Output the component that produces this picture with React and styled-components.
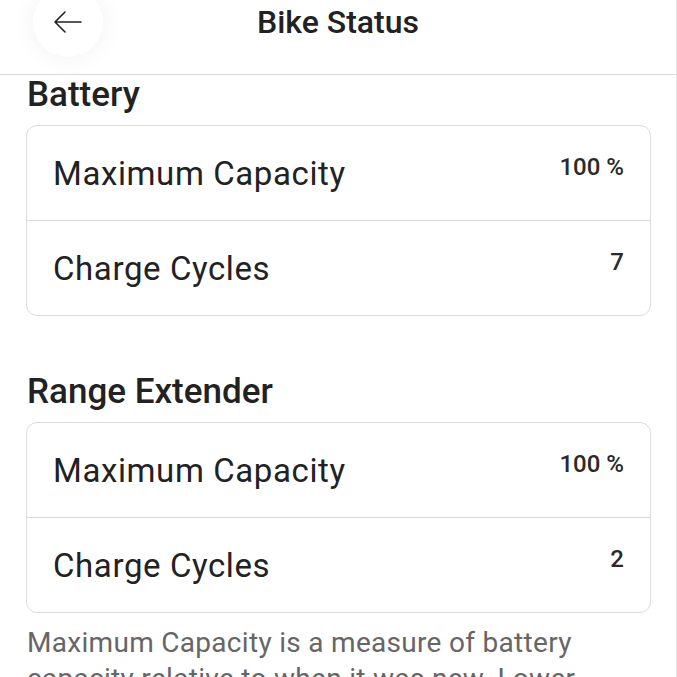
import React from "react";
import styled, { createGlobalStyle } from "styled-components";

const GlobalStyle = createGlobalStyle`
  html, body {
    margin: 0;
    padding: 0;
    background: #fff;
    overflow: hidden;
  }
  body {
    font-family: Roboto, "Liberation Sans", sans-serif;
    color: #222;
  }
`;

const Page = styled.div`
  width: 677px;
  height: 677px;
  overflow: hidden;
  display: flex;
  flex-direction: column;
  border-right: 1px solid #e6e6e6;
  box-sizing: border-box;
`;

const Header = styled.header`
  position: relative;
  height: 74px;
  flex-shrink: 0;
  display: flex;
  align-items: flex-start;
  justify-content: center;
  border-bottom: 1px solid #d9d9d9;
  background: #fff;
`;

const BackButton = styled.button`
  position: absolute;
  left: 33px;
  top: -13px;
  width: 70px;
  height: 70px;
  border-radius: 50%;
  border: none;
  background: #fff;
  box-shadow: 0 0 26px rgba(0, 0, 0, 0.06);
  display: flex;
  align-items: center;
  justify-content: center;
  padding: 0;
  cursor: pointer;
`;

const Title = styled.h1`
  margin: 0;
  padding-top: 3px;
  font-size: 32px;
  font-weight: 500;
  color: #222;
`;

const Content = styled.main`
  padding: 0 25px 0 26px;
  display: flex;
  flex-direction: column;
`;

const SectionTitle = styled.h2`
  margin: ${({ $first }) => ($first ? "0" : "56px")} 0 10px 1px;
  font-size: 35px;
  font-weight: 500;
  line-height: 40px;
  color: #222;
`;

const Card = styled.div`
  border: 1px solid #dcdcdc;
  border-radius: 11px;
  overflow: hidden;
`;

const Row = styled.div`
  height: 94px;
  display: flex;
  align-items: center;
  justify-content: space-between;
  padding: 0 26px 0 26px;
  & + & {
    border-top: 1px solid #d9d9d9;
  }
`;

const Label = styled.span`
  font-size: 33px;
  font-weight: 400;
  color: #222;
  letter-spacing: 0.6px;
`;

const Value = styled.span`
  font-size: 24px;
  font-weight: 500;
  color: #2a2a2a;
  margin-bottom: 12px;
`;

const Note = styled.p`
  margin: 12px 0 0 1px;
  font-size: 28px;
  line-height: 36px;
  letter-spacing: 0.3px;
  color: #666;
`;

const ArrowIcon = () => (
  <svg width="30" height="22" viewBox="0 0 30 22" fill="none">
    <path
      d="M28 11H2M12 1L2 11l10 10"
      stroke="#222"
      strokeWidth="1.6"
      strokeLinecap="round"
      strokeLinejoin="round"
    />
  </svg>
);

const sections = [
  {
    title: "Battery",
    rows: [
      { label: "Maximum Capacity", value: "100 %" },
      { label: "Charge Cycles", value: "7" },
    ],
  },
  {
    title: "Range Extender",
    rows: [
      { label: "Maximum Capacity", value: "100 %" },
      { label: "Charge Cycles", value: "2" },
    ],
  },
];

const App = () => {
  return (
    <>
      <GlobalStyle />
      <Page>
        <Header>
          <BackButton aria-label="Back">
            <ArrowIcon />
          </BackButton>
          <Title>Bike Status</Title>
        </Header>
        <Content>
          {sections.map((s, i) => (
            <React.Fragment key={s.title}>
              <SectionTitle $first={i === 0}>{s.title}</SectionTitle>
              <Card>
                {s.rows.map((r) => (
                  <Row key={r.label}>
                    <Label>{r.label}</Label>
                    <Value>{r.value}</Value>
                  </Row>
                ))}
              </Card>
            </React.Fragment>
          ))}
          <Note>
            Maximum Capacity is a measure of battery capacity relative to when
            it was new. Lower capacity may result in less range.
          </Note>
        </Content>
      </Page>
    </>
  );
};

export default App;
